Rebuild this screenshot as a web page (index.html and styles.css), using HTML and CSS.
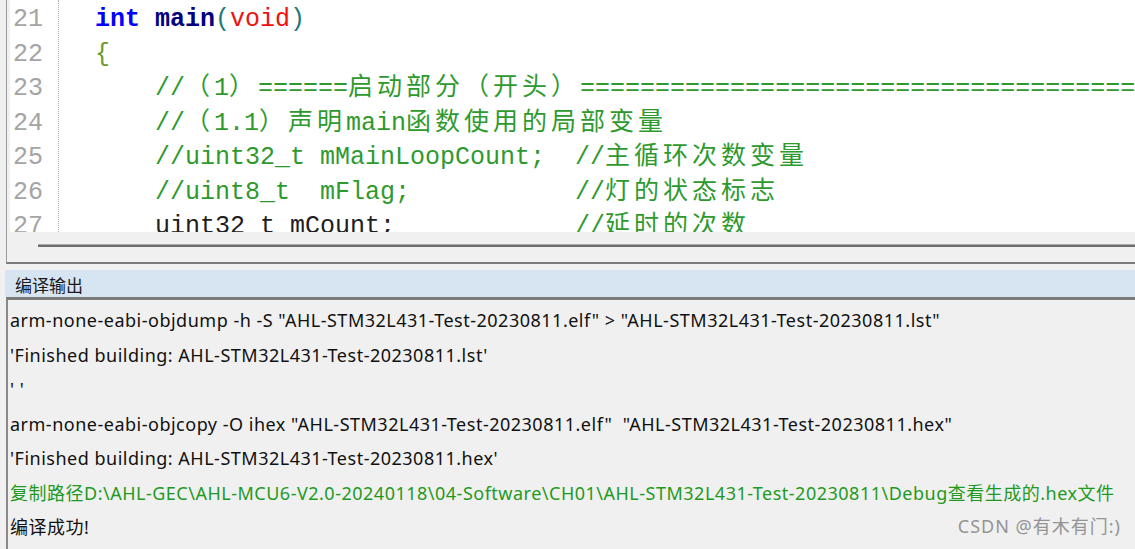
FILE: index.html
```html
<!DOCTYPE html>
<html lang="zh-CN">
<head>
    <meta charset="UTF-8">
    <title>编译输出</title>
    <link rel="stylesheet" href="styles.css">
</head>
<body>

<div class="editor">
    <div class="code-area">
        <div class="gutter">
            <div class="ln">21</div>
            <div class="ln">22</div>
            <div class="ln">23</div>
            <div class="ln">24</div>
            <div class="ln">25</div>
            <div class="ln">26</div>
            <div class="ln">27</div>
        </div>
        <div class="code">
            <div class="line"><span class="kw">int</span> <span class="fn">main</span><span class="par">(</span><span class="vd">void</span><span class="par">)</span></div>
            <div class="line"><span class="brace">{</span></div>
            <div class="line cm">    //<span class="cn">（</span>1<span class="cn">）</span>======<span class="cn">启动部分（开头）</span>==========================================</div>
            <div class="line cm">    //<span class="cn">（</span>1.1<span class="cn">）声明</span>main<span class="cn">函数使用的局部变量</span></div>
            <div class="line cm">    //uint32_t mMainLoopCount;  //<span class="cn">主循环次数变量</span></div>
            <div class="line cm">    //uint8_t  mFlag;           //<span class="cn">灯的状态标志</span></div>
            <div class="line">    <span class="plain">uint32_t mCount;</span>            <span class="cm">//<span class="cn">延时的次数</span></span></div>
        </div>
    </div>
    <div class="hscroll">
        <div class="thumb"></div>
    </div>
</div>

<div class="output">
    <div class="output-title">编译输出</div>
    <div class="output-body">
        <div class="msg">arm-none-eabi-objdump -h -S "AHL-STM32L431-Test-20230811.elf" &gt; "AHL-STM32L431-Test-20230811.lst"</div>
        <div class="msg">'Finished building: AHL-STM32L431-Test-20230811.lst'</div>
        <div class="msg">' '</div>
        <div class="msg">arm-none-eabi-objcopy -O ihex "AHL-STM32L431-Test-20230811.elf"&nbsp; "AHL-STM32L431-Test-20230811.hex"</div>
        <div class="msg">'Finished building: AHL-STM32L431-Test-20230811.hex'</div>
        <div class="msg ok">复制路径D:\AHL-GEC\AHL-MCU6-V2.0-20240118\04-Software\CH01\AHL-STM32L431-Test-20230811\Debug查看生成的.hex文件</div>
        <div class="msg">编译成功!</div>
    </div>
    <div class="watermark">CSDN @有木有门:)</div>
</div>

</body>
</html>
```

FILE: styles.css
```css
body {
    margin: 0;
    width: 1135px;
    height: 549px;
    overflow: hidden;
    background-color: #f0f0f0;
    font-family: "Noto Sans", "Noto Sans CJK SC", sans-serif;
}
.editor {
    margin-left: 6px;
    border-left: 1px solid #9a9a9a;
    border-bottom: 2px solid #7a7a7a;
    padding-left: 3px;
    background-color: #f0f0f0;
}
.code-area {
    display: flex;
    height: 232px;
    overflow: hidden;
    background-color: #fff;
    font-family: "Liberation Mono", "Noto Sans CJK SC", monospace;
    font-size: 25px;
    line-height: 34.5px;
}
.ln,
.line {
    white-space: pre;
}
.gutter {
    flex-shrink: 0;
    width: 45px;
    padding-left: 3px;
    padding-top: 3px;
    border-right: 1px dotted #b0b0b0;
    color: #a4a4a4;
}
.code {
    padding-left: 36px;
    padding-top: 3px;
}
.cn {
    letter-spacing: 4px;
}
.kw {
    color: #0000ff;
    font-weight: bold;
}
.fn {
    color: #000080;
    font-weight: bold;
}
.par {
    color: #1a7a7a;
}
.vd {
    color: #f01010;
}
.brace {
    color: #6a9a2a;
}
.cm {
    color: #2e9a2e;
}
.plain {
    color: #202020;
}
.hscroll {
    height: 30px;
    padding-left: 28px;
    padding-top: 12px;
    box-sizing: border-box;
}
.thumb {
    height: 2px;
    background-color: #6e6e6e;
    border-top: 1px solid #a8a8a8;
}
.output {
    position: relative;
    margin-top: 6px;
    margin-left: 5px;
}
.output-title {
    height: 27px;
    padding-left: 10px;
    background-color: #d7e4f2;
    font-size: 17px;
    line-height: 32px;
    color: #1a1a1a;
}
.output-body {
    height: 260px;
    margin-left: 1px;
    border-top: 3px solid #7a7a7a;
    border-left: 2px solid #8a8a8a;
    padding-left: 2px;
    padding-top: 3px;
}
.msg {
    height: 34.5px;
    line-height: 34.5px;
    font-size: 18px;
    letter-spacing: 0.5px;
    color: #111;
    white-space: nowrap;
}
.msg.ok {
    color: #1f9a1f;
}
.watermark {
    position: absolute;
    right: 14px;
    top: 242px;
    font-size: 18px;
    letter-spacing: 1px;
    color: #949494;
}
```
